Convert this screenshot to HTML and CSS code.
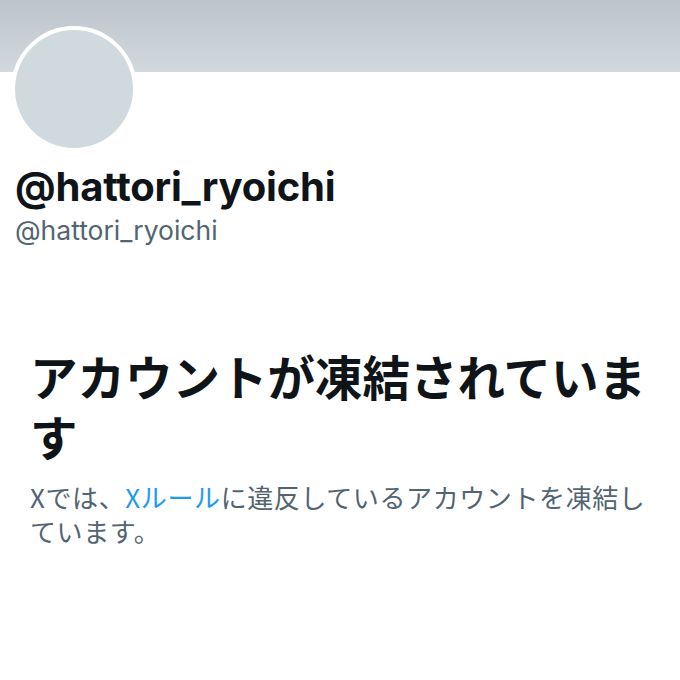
FILE: index.html
```html
<!DOCTYPE html>
<html lang="ja">
<head>
<meta charset="utf-8">
<link rel="stylesheet" href="styles.css">
</head>
<body>
<div class="page">
  <div class="banner"></div>
  <div class="avatar"><div class="avatar-inner"></div></div>
  <div class="names">
    <div class="display-name">@hattori_ryoichi</div>
    <div class="handle">@hattori_ryoichi</div>
  </div>
  <div class="notice">
    <h1 class="title">アカウントが凍結されています</h1>
    <p class="desc">Xでは、<span class="link">Xルール</span>に違反しているアカウントを凍結しています。</p>
  </div>
</div>
</body>
</html>
```
FILE: styles.css
```css
html, body {
  margin: 0;
  padding: 0;
  background: #ffffff;
}
.page {
  width: 680px;
  height: 680px;
  overflow: hidden;
  font-family: Inter, "Noto Sans CJK JP", sans-serif;
}
.banner {
  height: 72px;
  background: linear-gradient(to bottom, #bcc3cb, #d2d9dd);
}
.avatar {
  width: 118px;
  height: 118px;
  margin: -46px 0 0 11px;
  border: 4px solid #ffffff;
  border-radius: 50%;
  background: #ffffff;
}
.avatar-inner {
  width: 118px;
  height: 118px;
  border-radius: 50%;
  background: #cfd9de;
}
.names {
  padding: 11px 0 0 15px;
}
.display-name {
  font-size: 40px;
  font-weight: 700;
  color: #0f1419;
  line-height: 48px;
  letter-spacing: -0.2px;
}
.handle {
  font-size: 26.5px;
  color: #536471;
  line-height: 32px;
  margin-top: 3px;
}
.notice {
  padding: 100px 20px 0 30px;
}
.title {
  margin: 0;
  font-family: "Noto Sans CJK JP", sans-serif;
  font-size: 47.5px;
  font-weight: 700;
  line-height: 60px;
  color: #0f1419;
}
.desc {
  margin: 14px 0 0 0;
  font-family: "Noto Sans CJK JP", sans-serif;
  font-size: 26px;
  line-height: 34px;
  letter-spacing: 0.6px;
  color: #536471;
}
.link {
  color: #1d9bf0;
}
```
